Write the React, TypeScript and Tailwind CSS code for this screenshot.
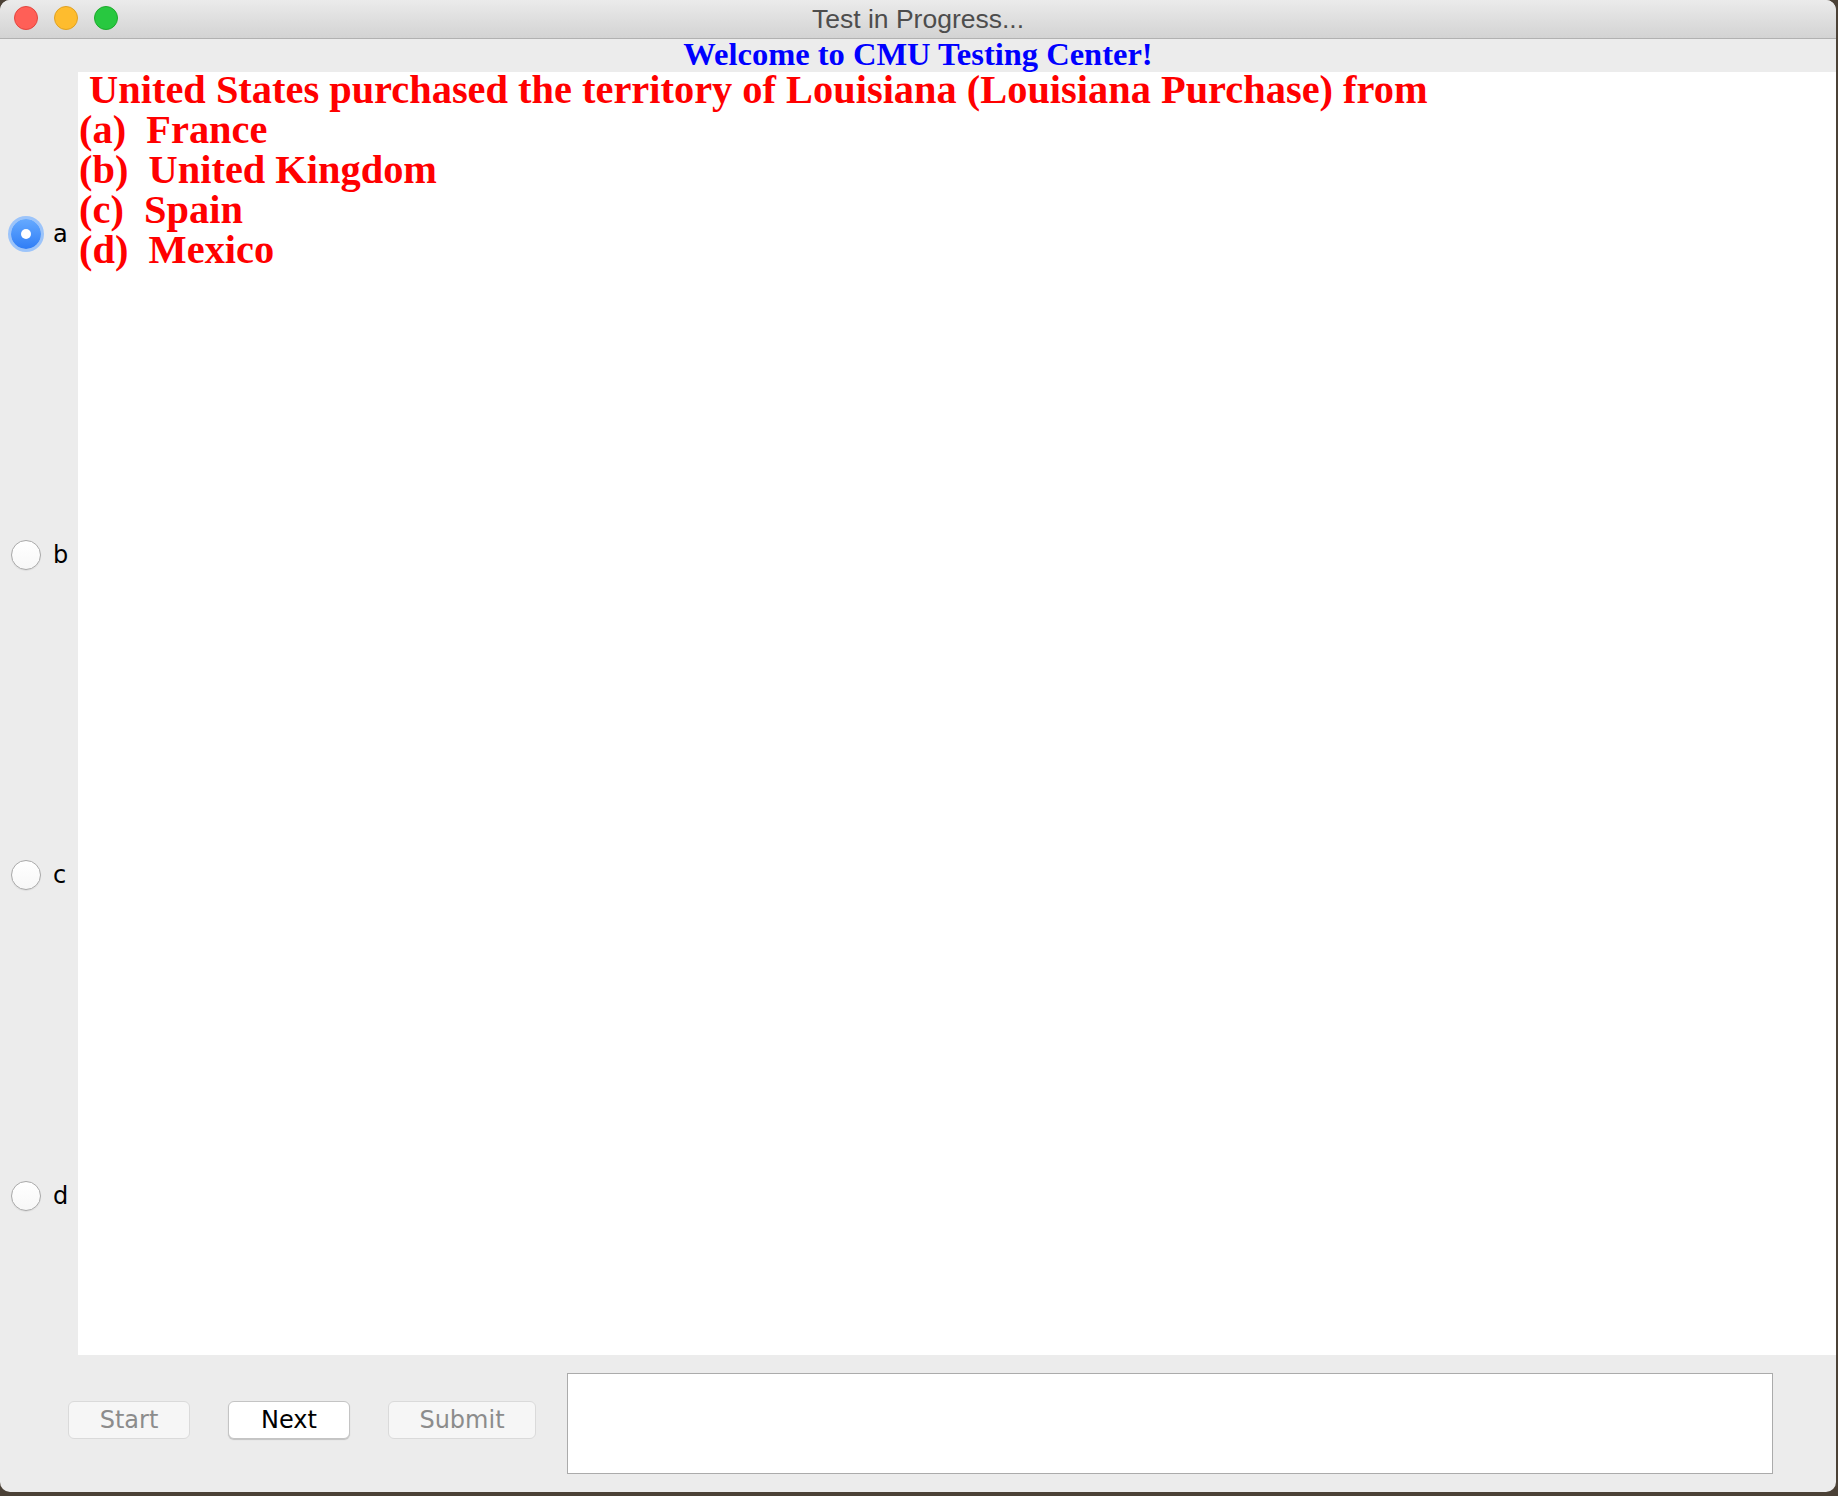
const serif = "font-['Liberation_Serif','Times_New_Roman',serif]";
const ui = "font-['DejaVu_Sans','Open_Sans',sans-serif]";

const choices = ["a", "b", "c", "d"];
const options = [
  ["(a)", "France"],
  ["(b)", "United Kingdom"],
  ["(c)", "Spain"],
  ["(d)", "Mexico"],
];

function Radio({ checked }: { checked: boolean }) {
  if (checked) {
    return (
      <span className="flex h-[30px] w-[30px] items-center justify-center rounded-full bg-gradient-to-b from-[#66aaff] to-[#2f7df6] ring-[3px] ring-[#9cc4fa]">
        <span className="h-[10px] w-[10px] rounded-full bg-white" />
      </span>
    );
  }
  return (
    <span className="h-[30px] w-[30px] rounded-full border border-[#a9a9a9] bg-gradient-to-b from-white to-[#f7f7f7] shadow-[0_1px_1px_rgba(0,0,0,0.06)]" />
  );
}

function Button({ label, enabled }: { label: string; enabled?: boolean }) {
  return (
    <button
      className={
        enabled
          ? `flex h-[38px] w-full items-center justify-center rounded-[6px] border border-[#c4c4c4] bg-white text-[24px] text-black shadow-[0_1px_1px_rgba(0,0,0,0.18)] ${ui}`
          : `flex h-[38px] w-full items-center justify-center rounded-[6px] border border-[#dadada] bg-[#f6f6f6] text-[24px] text-[#8c8c8c] ${ui}`
      }
    >
      {label}
    </button>
  );
}

export default function App() {
  return (
    <div className="h-[1496px] w-[1838px] bg-[#4b4136]">
      <div className="flex h-[1492px] w-[1836px] flex-col overflow-hidden rounded-[10px] bg-[#ececec]">
        {/* title bar */}
        <div className="grid h-[39px] grid-cols-[1fr_auto_1fr] items-center border-b border-[#b1b1b1] bg-gradient-to-b from-[#ebebeb] to-[#d3d3d3]">
          <div className="flex items-center gap-[16px] pb-[3px] pl-[14px]">
            <span className="h-[24px] w-[24px] rounded-full border border-[#e2463f] bg-[#ff5f57]" />
            <span className="h-[24px] w-[24px] rounded-full border border-[#dfa123] bg-[#febc2e]" />
            <span className="h-[24px] w-[24px] rounded-full border border-[#1daa2c] bg-[#28c840]" />
          </div>
          <div className="text-[26.5px] leading-none text-[#4d4d4d] font-['Liberation_Sans',Arial,sans-serif]">
            Test in Progress...
          </div>
          <div />
        </div>

        {/* header label */}
        <div className="flex h-[33px] items-start justify-center">
          <span className={`mt-[2px] text-[32.5px] font-bold leading-[27px] text-[#0000ff] ${serif}`}>
            Welcome to CMU Testing Center!
          </span>
        </div>

        {/* middle */}
        <div className="flex h-[1283px]">
          <div className="grid w-[78px] grid-rows-4">
            {choices.map((c, i) => (
              <label key={c} className="flex items-center gap-[12px] pl-[11px] pt-[3px]">
                <Radio checked={i === 0} />
                <span className={`text-[24px] leading-none text-black ${ui}`}>{c}</span>
              </label>
            ))}
          </div>
          <div className="flex-1 bg-white">
            <div className={`-mt-[2px] whitespace-pre pl-[1px] text-[40.4px] font-bold leading-[40px] text-[#ff0000] ${serif}`}>
              <div> United States purchased the territory of Louisiana (Louisiana Purchase) from</div>
              {options.map(([k, v]) => (
                <div key={k}>
                  {k}  {v}
                </div>
              ))}
            </div>
          </div>
        </div>

        {/* bottom */}
        <div className="flex h-[137px] items-start pl-[68px] pr-[63px]">
          <div className="mt-[46px] flex gap-[38px]">
            <div className="w-[122px]">
              <Button label="Start" />
            </div>
            <div className="w-[122px]">
              <Button label="Next" enabled />
            </div>
            <div className="w-[148px]">
              <Button label="Submit" />
            </div>
          </div>
          <div className="ml-[31px] mt-[18px] h-[101px] flex-1 border border-[#ababab] bg-white" />
        </div>
      </div>
    </div>
  );
}
